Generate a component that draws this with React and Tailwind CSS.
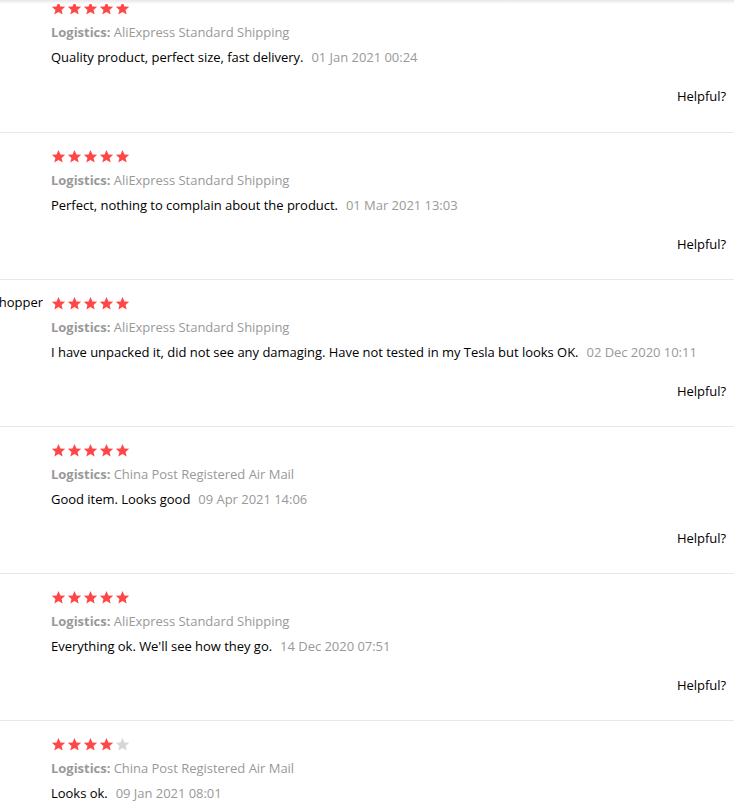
import React from "react";

const reviews = [
  {
    user: "",
    stars: 5,
    logistics: "AliExpress Standard Shipping",
    text: "Quality product, perfect size, fast delivery.",
    date: "01 Jan 2021 00:24",
  },
  {
    user: "",
    stars: 5,
    logistics: "AliExpress Standard Shipping",
    text: "Perfect, nothing to complain about the product.",
    date: "01 Mar 2021 13:03",
  },
  {
    user: "AliExpress Shopper",
    stars: 5,
    logistics: "AliExpress Standard Shipping",
    text: "I have unpacked it, did not see any damaging. Have not tested in my Tesla but looks OK.",
    date: "02 Dec 2020 10:11",
  },
  {
    user: "",
    stars: 5,
    logistics: "China Post Registered Air Mail",
    text: "Good item. Looks good",
    date: "09 Apr 2021 14:06",
  },
  {
    user: "",
    stars: 5,
    logistics: "AliExpress Standard Shipping",
    text: "Everything ok. We'll see how they go.",
    date: "14 Dec 2020 07:51",
  },
  {
    user: "",
    stars: 4,
    logistics: "China Post Registered Air Mail",
    text: "Looks ok.",
    date: "09 Jan 2021 08:01",
  },
];

function Star({ filled }) {
  return (
    <svg viewBox="0 0 24 24" className="w-[15px] h-[15px]">
      <path
        d="M12 1.5l3.1 7.1 7.6.6-5.8 5 1.8 7.5L12 17.7l-6.7 4 1.8-7.5-5.8-5 7.6-.6z"
        fill={filled ? "#ff4747" : "#d6d6d6"}
      />
    </svg>
  );
}

function Review({ review, first }) {
  return (
    <div
      className={`flex h-[147px] ${first ? "-mt-[15px]" : "border-t border-[#e8e8e8]"}`}
    >
      <div className="w-[43px] shrink-0 flex justify-end overflow-hidden whitespace-nowrap pt-[12px] leading-5 text-[13px] text-[#000]">
        {review.user}
      </div>
      <div className="flex-1 ml-2 flex flex-col tracking-[-0.03px]">
        <div className="flex gap-[1px] pt-[16px] h-[32px]">
          {[0, 1, 2, 3, 4].map((i) => (
            <Star key={i} filled={i < review.stars} />
          ))}
        </div>
        <div className="mt-[5px] leading-5 text-[13px] text-[#999]">
          <span className="font-bold">Logistics:</span> {review.logistics}
        </div>
        <div className="mt-[5px] leading-5 text-[13px] text-[#000]">
          {review.text}
          <span className="ml-2 text-[#999]">{review.date}</span>
        </div>
        <div className="mt-[19px] pr-2 text-right leading-5 text-[13px] text-[#000]">
          Helpful?
        </div>
      </div>
    </div>
  );
}

export default function App() {
  return (
    <div
      className="relative w-[734px] h-[805px] overflow-hidden bg-white"
      style={{ fontFamily: '"Open Sans", sans-serif' }}
    >
      <div className="absolute top-0 left-0 right-0 h-[4px] bg-gradient-to-b from-[#e6e6e6] to-white z-10" />
      {reviews.map((r, i) => (
        <Review key={i} review={r} first={i === 0} />
      ))}
    </div>
  );
}
